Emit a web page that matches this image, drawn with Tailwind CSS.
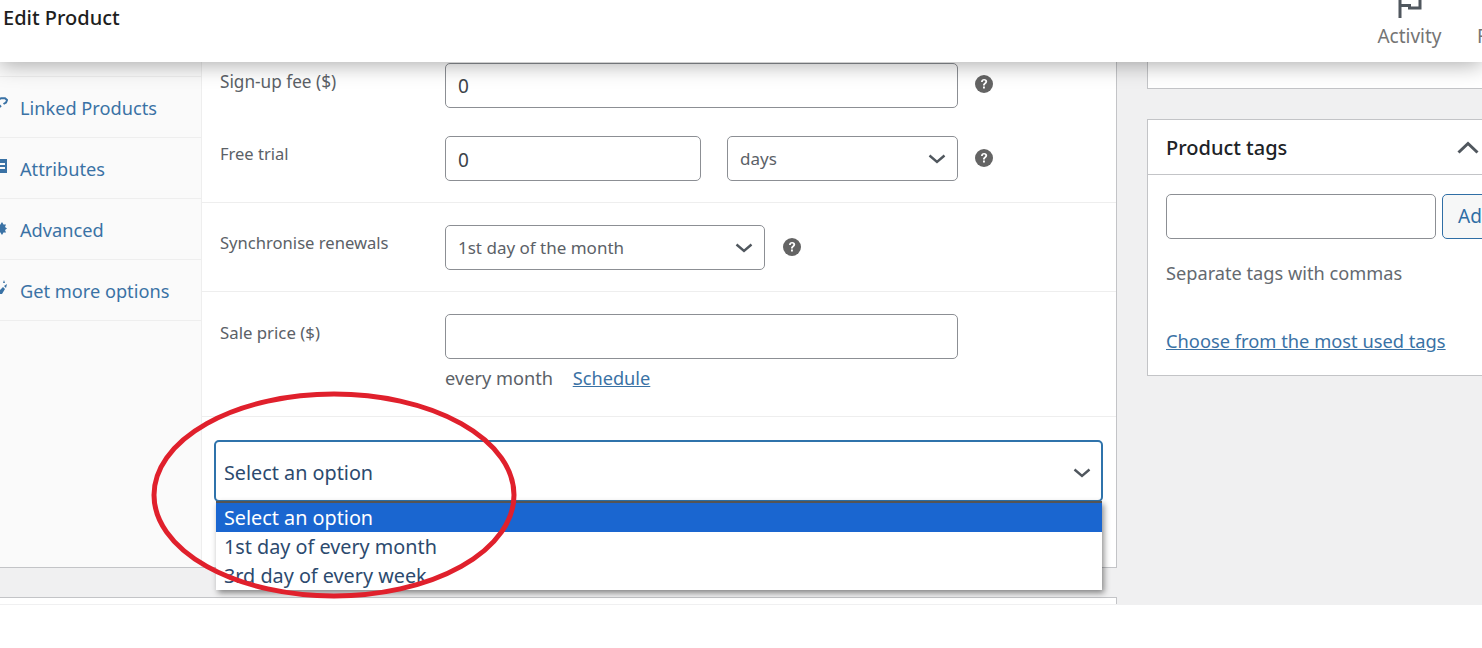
<!doctype html>
<html>
<head>
<meta charset="utf-8">
<script src="https://cdn.jsdelivr.net/npm/@tailwindcss/browser@4"></script>
</head>
<body class="bg-white font-['Noto_Sans',sans-serif]">
<div class="relative w-[1482px] h-[648px] overflow-hidden bg-white">

  <!-- top bar -->
  <header class="relative z-20 flex h-[62px] bg-white shadow-[0_2px_22px_rgba(0,0,0,0.35)]">
    <h1 class="pl-[3px] pt-[4px] text-[20px] leading-[28px] font-medium text-[#1e1e1e] w-[1378px] shrink-0">Edit Product</h1>
    <div class="flex flex-col items-center w-[63px] shrink-0">
      <svg class="w-[24px] h-[18px] text-[#50575e] mb-[6px]" viewBox="0 0 24 18" fill="none" stroke="currentColor" stroke-width="3"><path d="M2 18V-2M2 5.500H11.500V8H22V-2"/></svg>
      <span class="text-[19px] leading-[24px] text-[#757575]">Activity</span>
    </div>
    <div class="pl-[36px] pt-[24px] shrink-0 text-[19px] leading-[24px] text-[#757575] whitespace-nowrap">Finish setup</div>
  </header>

  <main class="flex h-[543px] bg-[#f0f0f1]">
    <!-- left column -->
    <div class="w-[1117px] shrink-0">
      <section class="flex h-[506px] bg-white border-r border-b border-[#c3c4c7]">
        <nav class="w-[202px] shrink-0 bg-[#fafafa] border-r border-[#eeeeee] text-[18.200px] text-[#3a72a5]">
          <div class="h-[15px] border-b border-[#eeeeee]"></div>
          <a class="flex items-center h-[61px] pl-[20px] pt-[4px] border-b border-[#eeeeee]">
            <svg class="absolute left-0 top-[97px] w-[8px] h-[11px]" viewBox="0 0 8 11" fill="none" stroke="currentColor" stroke-width="2"><path d="M-1 8 1 10M-2 3 1 1.200h4L7 3 6 5.500 3.500 7"/></svg>
            Linked Products
          </a>
          <a class="flex items-center h-[61px] pl-[20px] pt-[4px] border-b border-[#eeeeee]">
            <svg class="absolute left-0 top-[159px] w-[7px] h-[14px]" viewBox="0 0 7 14"><path d="M0 0h7v14H0zM0 4v2h5V4zM0 8v2h5V8z" fill="currentColor" fill-rule="evenodd"/></svg>
            Attributes
          </a>
          <a class="flex items-center h-[61px] pl-[20px] pt-[4px] border-b border-[#eeeeee]">
            <svg class="absolute left-0 top-[222px] w-[7px] h-[13px]" viewBox="0 0 7 13"><path d="M0 3 2 0l1.500 2.500L6 2.500 5 5l2 1.500L5 8l1 2.500H3.500L2 13 0 10z" fill="currentColor"/></svg>
            Advanced
          </a>
          <a class="flex items-center h-[61px] pl-[20px] pt-[4px] border-b border-[#eeeeee]">
            <svg class="absolute left-0 top-[280px] w-[7px] h-[15px]" viewBox="0 0 7 15"><path d="M0 14 0 10 3 7l2 2-3 5zM3 3l1-3 1 3zM4 6l3-2-1 4z" fill="currentColor"/></svg>
            Get more options
          </a>
        </nav>

        <div class="flex-1 min-w-0 text-[16.700px] text-[#5b6167]">
          <div class="pt-px pb-[21px] border-b border-[#eeeeee]">
            <div class="flex h-[45px]">
              <label class="w-[243px] pl-[18px] pt-[6px] text-[17.200px]">Sign-up fee ($)</label>
              <input value="0" class="w-[513px] h-[45px] px-[12px] text-[19px] text-[#3c434a] border border-[#8c8f94] rounded-[5px] bg-transparent">
              <svg class="w-[18px] h-[18px] ml-[17px] mt-[12px] text-[#646464]" viewBox="0 0 18 18"><circle cx="9" cy="9" r="9" fill="currentColor"/><path d="M6 7c0-2 1.400-3 3.100-3C11 4 12.200 5 12.200 6.600c0 2.200-2.400 2.200-2.400 4H8c0-2.700 2.300-2.700 2.300-4 0-.6-.5-1-1.200-1-.8 0-1.300.5-1.300 1.400zM8 11.600h1.900v2H8z" fill="#fff"/></svg>
            </div>
            <div class="flex h-[45px] mt-[28px]">
              <label class="w-[243px] pl-[18px] pt-[6px] text-[16.500px]">Free trial</label>
              <input value="0" class="w-[256px] h-[45px] px-[12px] pt-[2px] text-[19px] text-[#3c434a] border border-[#8c8f94] rounded-[5px]">
              <div class="flex items-center justify-between w-[231px] h-[45px] ml-[26px] pl-[12px] pr-[11px] border border-[#8c8f94] rounded-[5px] text-[17px]">
                days
                <svg class="w-[18px] h-[10px] text-[#50575e]" viewBox="0 0 18 10" fill="none" stroke="currentColor" stroke-width="2.400"><path d="M1.500 1.500 9 8l7.500-6.500"/></svg>
              </div>
              <svg class="w-[18px] h-[18px] ml-[17px] mt-[13px] text-[#646464]" viewBox="0 0 18 18"><circle cx="9" cy="9" r="9" fill="currentColor"/><path d="M6 7c0-2 1.400-3 3.100-3C11 4 12.200 5 12.200 6.600c0 2.200-2.400 2.200-2.400 4H8c0-2.700 2.300-2.700 2.300-4 0-.6-.5-1-1.200-1-.8 0-1.300.5-1.300 1.400zM8 11.600h1.900v2H8z" fill="#fff"/></svg>
            </div>
          </div>

          <div class="flex h-[89px] pt-[22px] border-b border-[#eeeeee]">
            <label class="w-[243px] pl-[18px] pt-[6px] text-[16.600px]">Synchronise renewals</label>
            <div class="flex items-center justify-between w-[320px] h-[45px] pl-[12px] pr-[11px] border border-[#8c8f94] rounded-[5px] text-[17px]">
              1st day of the month
              <svg class="w-[18px] h-[10px] text-[#50575e]" viewBox="0 0 18 10" fill="none" stroke="currentColor" stroke-width="2.400"><path d="M1.500 1.500 9 8l7.500-6.500"/></svg>
            </div>
            <svg class="w-[18px] h-[18px] ml-[18px] mt-[13px] text-[#646464]" viewBox="0 0 18 18"><circle cx="9" cy="9" r="9" fill="currentColor"/><path d="M6 7c0-2 1.400-3 3.100-3C11 4 12.200 5 12.200 6.600c0 2.200-2.400 2.200-2.400 4H8c0-2.700 2.300-2.700 2.300-4 0-.6-.5-1-1.200-1-.8 0-1.300.5-1.300 1.400zM8 11.600h1.900v2H8z" fill="#fff"/></svg>
          </div>

          <div class="flex h-[125px] pt-[22px] border-b border-[#eeeeee]">
            <label class="w-[243px] pl-[18px] pt-[6px] text-[16.800px]">Sale price ($)</label>
            <div>
              <input class="block w-[513px] h-[45px] border border-[#8c8f94] rounded-[5px]">
              <p class="mt-[6px] text-[18.200px] leading-[26px]">every month <a class="ml-[15px] underline text-[#3a72a5]">Schedule</a></p>
            </div>
          </div>

          <div class="pl-[12px] pr-[13px] pt-[23px]">
            <div class="relative">
              <div class="flex items-center justify-between h-[62px] pl-[8px] pt-[3px] pr-[10px] border-2 border-[#2f73ab] rounded-[5px] text-[19.800px] text-[#2c4a6e]">
                Select an option
                <svg class="w-[18px] h-[10px] text-[#50575e]" viewBox="0 0 18 10" fill="none" stroke="currentColor" stroke-width="2.400"><path d="M1.500 1.500 9 8l7.500-6.500"/></svg>
              </div>
              <ul class="absolute z-10 left-[2px] right-px top-[61px] h-[89px] bg-white text-[19.800px] leading-[29px] text-[#2c4a6e] border-t-2 border-[#555] shadow-[2px_3px_6px_rgba(0,0,0,0.45)]">
                <li class="pl-[8px] bg-[#1a66d0] text-white">Select an option</li>
                <li class="pl-[8px]">1st day of every month</li>
                <li class="pl-[8px]">3rd day of every week</li>
              </ul>
            </div>
          </div>
        </div>
      </section>
      <section class="h-[7px] mt-[29px] bg-white border-t border-r border-[#c3c4c7]"></section>
    </div>

    <!-- right column -->
    <aside class="w-[335px] shrink-0 ml-[30px]">
      <div class="h-[27px] bg-white border-l border-b border-[#c3c4c7]"></div>
      <div class="h-[257px] mt-[30px] bg-white border-l border-t border-b border-[#c3c4c7]">
        <div class="flex items-center justify-between h-[55px] pl-[18px] pr-[3px] pt-[2px] border-b border-[#c3c4c7]">
          <h2 class="text-[20px] font-medium text-[#1d2327]">Product tags</h2>
          <svg class="w-[22px] h-[13px] text-[#50575e] -mt-[2px]" viewBox="0 0 22 13" fill="none" stroke="currentColor" stroke-width="3"><path d="M1.500 11.500 11 2.500l9.500 9"/></svg>
        </div>
        <div class="pl-[18px] pt-[19px]">
          <div class="flex">
            <input class="w-[270px] h-[45px] border border-[#8c8f94] rounded-[5px] shrink-0">
            <button class="w-[80px] h-[45px] ml-[6px] pl-[15px] text-left text-[19px] text-[#2f6ea5] bg-[#f6f7f7] border border-[#2f6ea5] rounded-[5px] shrink-0">Add</button>
          </div>
          <p class="mt-[21px] text-[18.200px] text-[#646970]">Separate tags with commas</p>
          <a class="block mt-[40px] text-[18.300px] underline text-[#3a72a5]">Choose from the most used tags</a>
        </div>
      </div>
    </aside>
  </main>

  <!-- red hand-drawn marker -->
  <svg class="absolute left-[150px] top-[388px] z-30 w-[370px] h-[214px]" viewBox="0 0 370 214" fill="none"><ellipse cx="184" cy="107" rx="180" ry="101" stroke="#e0202c" stroke-width="5"/></svg>
</div>
</body>
</html>
